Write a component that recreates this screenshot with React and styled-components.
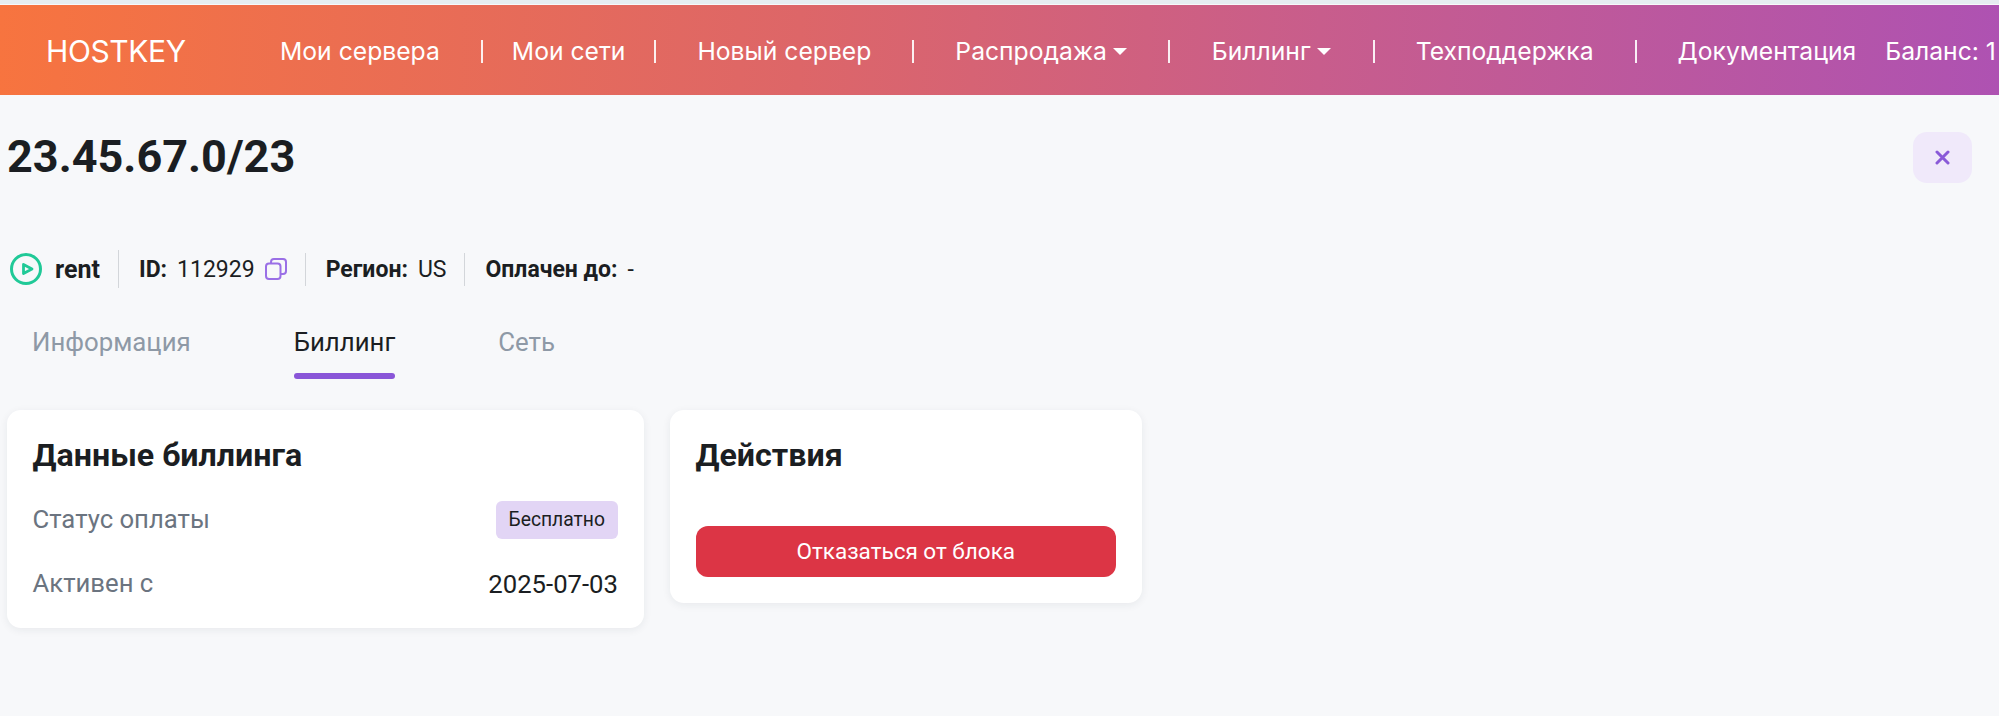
import React from 'react';
import styled, { createGlobalStyle } from 'styled-components';

const GlobalStyle = createGlobalStyle`
  html, body {
    margin: 0;
    padding: 0;
    background: #f7f8fa;
    overflow: hidden;
  }
  body {
    font-family: Roboto, "Liberation Sans", sans-serif;
    color: #1b1e22;
  }
`;

const Page = styled.div`
  width: 1999px;
  height: 716px;
  padding-top: 5px;
  box-sizing: border-box;
  overflow: hidden;
  background: linear-gradient(#e6edf1 0 4px, #f7f8fa 4px);
`;

const Header = styled.header`
  display: flex;
  align-items: center;
  height: 90px;
  padding-left: 46px;
  padding-top: 2px;
  box-sizing: border-box;
  overflow: hidden;
  background: linear-gradient(92deg, #f7743f 0%, #dd6668 40%, #c85d8c 66%, #ae52b2 100%);
  color: #fff;
  font-family: Inter, sans-serif;
  font-size: 24.7px;
  white-space: nowrap;
  & > * {
    flex: none;
  }
`;

const Logo = styled.div`
  width: 234px;
  font-size: 30px;
  letter-spacing: -0.4px;
`;

const NavItem = styled.a`
  display: flex;
  align-items: center;
  gap: 6px;
  padding: 0 ${(p) => p.$gap || 41}px;
  &:first-of-type {
    padding-left: 0;
  }
`;

const Caret = styled.span`
  width: 0;
  height: 0;
  border-left: 7px solid transparent;
  border-right: 7px solid transparent;
  border-top: 7px solid #fff;
`;

const Pipe = styled.span`
  width: 2px;
  height: 23px;
  background: rgba(255, 255, 255, 0.9);
`;

const Balance = styled.div`
  margin-left: -12px;
`;

const TitleRow = styled.div`
  display: flex;
  justify-content: space-between;
  align-items: center;
  padding: 36px 27px 0 7px;
  height: 52px;
`;

const Title = styled.h1`
  margin: 0;
  font-size: 45px;
  font-weight: 700;
  line-height: 52px;
`;

const CloseButton = styled.button`
  display: flex;
  align-items: center;
  justify-content: center;
  width: 59px;
  height: 51px;
  padding: 0;
  border: 0;
  border-radius: 14px;
  background: #f0e9fa;
  color: #8a5ad8;
`;

const MetaRow = styled.div`
  display: flex;
  align-items: center;
  margin-top: 67px;
  padding-left: 10px;
  height: 38px;
  font-size: 23px;
`;

const MetaCell = styled.div`
  display: flex;
  align-items: center;
  gap: ${(p) => p.$gap || 10}px;
  padding-right: 18px;
  margin-right: 20px;
  height: ${(p) => (p.$tall ? 38 : 33)}px;
  border-right: ${(p) => (p.$last ? 0 : '1.5px solid #d3d6da')};
`;

const Bold = styled.b`
  font-weight: 700;
`;

const StatusText = styled.b`
  font-size: 25px;
  font-weight: 700;
`;

const Tabs = styled.nav`
  display: flex;
  margin: 34px 0 0 32px;
  height: 57px;
  gap: 103px;
`;

const Tab = styled.div`
  position: relative;
  font-size: 25.8px;
  line-height: 40px;
  color: ${(p) => (p.$active ? '#1b1e22' : '#8e99a6')};
  &::after {
    content: '';
    display: ${(p) => (p.$active ? 'block' : 'none')};
    position: absolute;
    left: 0;
    right: 0;
    bottom: 0;
    height: 6px;
    border-radius: 3px;
    background: #8a56d8;
  }
`;

const Cards = styled.div`
  display: flex;
  align-items: flex-start;
  gap: 26px;
  margin: 31px 0 0 7px;
`;

const Card = styled.section`
  box-sizing: border-box;
  width: ${(p) => p.$width}px;
  height: ${(p) => p.$height}px;
  padding: 26px 26px 26px 25.5px;
  background: #fff;
  border-radius: 14px;
  box-shadow: 0 2px 8px rgba(30, 40, 60, 0.07);
`;

const CardTitle = styled.h2`
  margin: 0;
  font-size: 32.2px;
  font-weight: 700;
  line-height: 38px;
`;

const InfoRow = styled.div`
  display: flex;
  justify-content: space-between;
  align-items: center;
  height: ${(p) => p.$height}px;
  margin-top: ${(p) => p.$top}px;
  font-size: 25.7px;
  color: #1b1e22;
`;

const InfoLabel = styled.span`
  color: #6b7480;
  position: relative;
  top: -1px;
`;

const Badge = styled.span`
  padding: 0 13px;
  line-height: 38px;
  font-size: 19.3px;
  border-radius: 6px;
  background: #e2d5f5;
`;

const DangerButton = styled.button`
  display: block;
  width: 100%;
  height: 51px;
  margin-top: 52px;
  padding-bottom: 3px;
  border: 0;
  border-radius: 12px;
  background: #dc3545;
  color: #fff;
  font-family: Roboto, sans-serif;
  font-size: 22.5px;
`;

const PlayIcon = () => (
  <svg width="32" height="32" viewBox="0 0 32 32" fill="none" stroke="#20c997" strokeLinejoin="round">
    <circle cx="16" cy="16" r="14.5" strokeWidth="3" />
    <path d="M13.5 11.5 22 16 13.5 20.5Z" strokeWidth="2.8" />
  </svg>
);

const CopyIcon = () => (
  <svg width="22" height="22" viewBox="0 0 22 22" fill="none" stroke="#9a6fe6" strokeWidth="2">
    <rect x="1" y="5.5" width="14.5" height="15.5" rx="3" />
    <path d="M6 5.5V4a3 3 0 0 1 3-3h9a3 3 0 0 1 3 3v9a3 3 0 0 1-3 3h-2.5" />
  </svg>
);

const CrossIcon = () => (
  <svg width="15" height="15" viewBox="0 0 15 15" stroke="currentColor" strokeWidth="3" strokeLinecap="round">
    <path d="M2 2 13 13M13 2 2 13" />
  </svg>
);

export default function App() {
  return (
    <Page>
      <GlobalStyle />
      <Header>
        <Logo>HOSTKEY</Logo>
        <NavItem>Мои сервера</NavItem>
        <Pipe />
        <NavItem $gap={29}>Мои сети</NavItem>
        <Pipe />
        <NavItem>Новый сервер</NavItem>
        <Pipe />
        <NavItem>Распродажа<Caret /></NavItem>
        <Pipe />
        <NavItem $gap={42}>Биллинг<Caret /></NavItem>
        <Pipe />
        <NavItem>Техподдержка</NavItem>
        <Pipe />
        <NavItem>Документация</NavItem>
        <Balance>Баланс: 1</Balance>
      </Header>

      <TitleRow>
        <Title>23.45.67.0/23</Title>
        <CloseButton aria-label="Закрыть"><CrossIcon /></CloseButton>
      </TitleRow>

      <MetaRow>
        <MetaCell $gap={13} $tall><PlayIcon /><StatusText>rent</StatusText></MetaCell>
        <MetaCell>
          <Bold>ID:</Bold> 112929 <CopyIcon />
        </MetaCell>
        <MetaCell><Bold>Регион:</Bold> US</MetaCell>
        <MetaCell $last><Bold>Оплачен до:</Bold> -</MetaCell>
      </MetaRow>

      <Tabs>
        <Tab>Информация</Tab>
        <Tab $active>Биллинг</Tab>
        <Tab>Сеть</Tab>
      </Tabs>

      <Cards>
        <Card $width={637} $height={218}>
          <CardTitle>Данные биллинга</CardTitle>
          <InfoRow $top={22} $height={48}>
            <InfoLabel>Статус оплаты</InfoLabel>
            <Badge>Бесплатно</Badge>
          </InfoRow>
          <InfoRow $top={16} $height={48}>
            <InfoLabel>Активен с</InfoLabel>
            <span>2025-07-03</span>
          </InfoRow>
        </Card>
        <Card $width={472} $height={193}>
          <CardTitle>Действия</CardTitle>
          <DangerButton>Отказаться от блока</DangerButton>
        </Card>
      </Cards>
    </Page>
  );
}
